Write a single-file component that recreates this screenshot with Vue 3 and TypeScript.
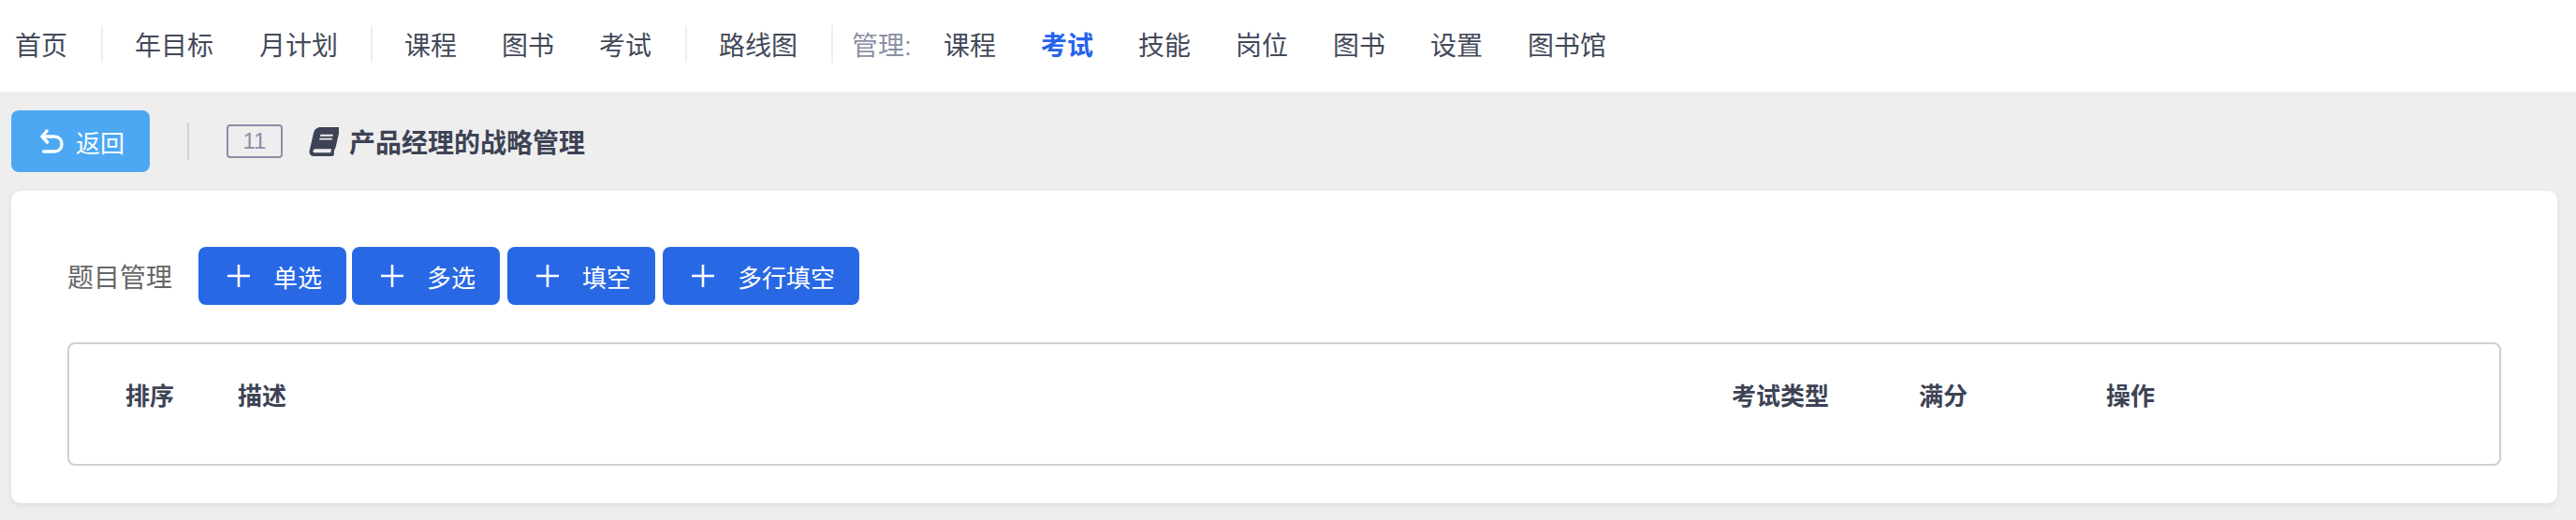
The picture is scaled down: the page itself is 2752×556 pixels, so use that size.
<template>
  <div class="page">
    <nav class="topnav">
      <div v-for="(group, i) in navGroups" :key="i" class="nav-group" :class="group.cls">
        <span v-if="group.label" class="nav-label">{{ group.label }}</span>
        <a
          v-for="item in group.items"
          :key="item"
          class="nav-item"
          :class="{ active: group.label && item === activeItem }"
        >{{ item }}</a>
      </div>
    </nav>

    <header class="toolbar">
      <button class="back-btn" type="button">
        <svg class="back-icon" viewBox="0 0 25 26" fill="none" stroke="#fff" stroke-width="3.4" stroke-linecap="round" stroke-linejoin="round">
          <path d="M7 2 L2 8 L7.5 14" />
          <path d="M2.5 8 H15 C20 8 23 11.5 23 16 C23 20.5 20 24 15 24 H3.5" />
        </svg>
        <span>返回</span>
      </button>
      <span class="toolbar-sep"></span>
      <span class="count">11</span>
      <svg class="book-icon" viewBox="-60 0 590 512" fill="#3d4354">
        <path transform="skewX(-13) translate(110 0)" d="M448 360V24c0-13.3-10.7-24-24-24H96C43 0 0 43 0 96v320c0 53 43 96 96 96h328c13.3 0 24-10.7 24-24v-16c0-7.5-3.5-14.3-8.9-18.7-4.2-15.4-4.2-59.3 0-74.7 5.4-4.3 8.9-11.1 8.9-18.6zM128 134c0-3.3 2.7-6 6-6h212c3.3 0 6 2.7 6 6v20c0 3.3-2.7 6-6 6H134c-3.3 0-6-2.7-6-6v-20zm0 64c0-3.3 2.7-6 6-6h212c3.3 0 6 2.7 6 6v20c0 3.3-2.7 6-6 6H134c-3.3 0-6-2.7-6-6v-20zm253.4 250H96c-17.7 0-32-14.3-32-32 0-17.6 14.4-32 32-32h285.4c-1.9 17.1-1.9 46.9 0 64z" />
      </svg>
      <h1 class="title">产品经理的战略管理</h1>
    </header>

    <main class="card">
      <div class="actions">
        <span class="actions-label">题目管理</span>
        <button v-for="btn in addButtons" :key="btn" class="add-btn" type="button">
          <svg class="plus" viewBox="0 0 24 24" stroke="#fff" stroke-width="2.6">
            <path d="M12 0 V24 M0 12 H24" />
          </svg>
          <span>{{ btn }}</span>
        </button>
      </div>

      <div class="table-box">
        <div class="table-head">
          <span class="col-sort">排序</span>
          <span class="col-desc">描述</span>
          <span class="col-type">考试类型</span>
          <span class="col-score">满分</span>
          <span class="col-op">操作</span>
        </div>
      </div>
    </main>
  </div>
</template>

<script setup lang="ts">
const activeItem = '考试'

const navGroups = [
  { cls: 'first', items: ['首页'] },
  { cls: 'plans', items: ['年目标', '月计划'] },
  { items: ['课程', '图书', '考试'] },
  { items: ['路线图'] },
  { cls: 'manage', label: '管理:', items: ['课程', '考试', '技能', '岗位', '图书', '设置', '图书馆'] },
]

const addButtons = ['单选', '多选', '填空', '多行填空']
</script>

<style>
html,
body {
  margin: 0;
  background: #eeeeee;
}
</style>

<style scoped>
.page {
  min-height: 556px;
  background: #eeeeee;
  font-family: "Liberation Sans", "Noto Sans CJK SC", sans-serif;
  color: #3d4354;
  box-sizing: border-box;
}

.topnav {
  display: flex;
  align-items: center;
  height: 98px;
  background: #fff;
}

.nav-group {
  display: flex;
  align-items: center;
  gap: 48px;
  height: 40px;
  margin-bottom: 4px;
  padding: 0 36px 0 34px;
  border-right: 2px solid #eeeeee;
  font-size: 28px;
}

.nav-group.first {
  padding-left: 16px;
}

.nav-group.plans {
  gap: 49px;
  padding-right: 35px;
}

.nav-group.manage {
  gap: 48px;
  padding-left: 20px;
  border-right: none;
}

.nav-label {
  margin-right: -14px;
  color: #8b90a3;
}

.nav-item {
  color: #434a5a;
  white-space: nowrap;
}

.nav-item.active {
  color: #2563eb;
  font-weight: 700;
}

.toolbar {
  display: flex;
  align-items: center;
  height: 66px;
  padding: 20px 0 20px 12px;
}

.back-btn {
  display: flex;
  align-items: center;
  gap: 13px;
  box-sizing: border-box;
  width: 148px;
  height: 66px;
  padding: 0 0 0 31px;
  border: none;
  border-radius: 8px;
  background: #4ca8f3;
  color: #fff;
  font: inherit;
  font-size: 26px;
}

.back-icon {
  width: 25px;
  height: 26px;
}

.toolbar-sep {
  width: 2px;
  height: 40px;
  margin: 0 40px;
  background: #d2d2d2;
}

.count {
  display: flex;
  align-items: center;
  justify-content: center;
  box-sizing: border-box;
  width: 60px;
  height: 36px;
  border: 2px solid #8a8fa6;
  border-radius: 4px;
  color: #8a8fa6;
  font-size: 24px;
}

.book-icon {
  width: 36px;
  height: 31px;
  margin-left: 24px;
}

.title {
  margin: 0 0 0 11px;
  font-size: 28px;
  font-weight: 700;
  color: #3d4354;
}

.card {
  box-sizing: border-box;
  height: 334px;
  margin: 0 20px 0 12px;
  padding: 60px 60px 40px 60px;
  border-radius: 10px;
  background: #fff;
  box-shadow: 0 2px 6px rgba(0, 0, 0, 0.08);
}

.actions {
  display: flex;
  align-items: center;
  height: 62px;
}

.actions-label {
  margin-right: 28px;
  font-size: 28px;
  color: #666;
}

.add-btn {
  display: flex;
  align-items: center;
  gap: 25px;
  height: 62px;
  margin-right: 8px;
  padding: 0 26px 0 31px;
  border: none;
  border-radius: 8px;
  background: #2868e4;
  color: #fff;
  font: inherit;
  font-size: 26px;
}

.add-btn:first-of-type {
  margin-right: 6px;
}

.plus {
  width: 24px;
  height: 24px;
}

.table-box {
  box-sizing: border-box;
  height: 132px;
  margin-top: 40px;
  border: 2px solid #cfcfcf;
  border-radius: 8px;
}

.table-head {
  display: grid;
  grid-template-columns: 120px 1596px 200px 200px 1fr;
  padding: 35px 0 0 60px;
  font-size: 26px;
  font-weight: 700;
  color: #3d4354;
}
</style>
